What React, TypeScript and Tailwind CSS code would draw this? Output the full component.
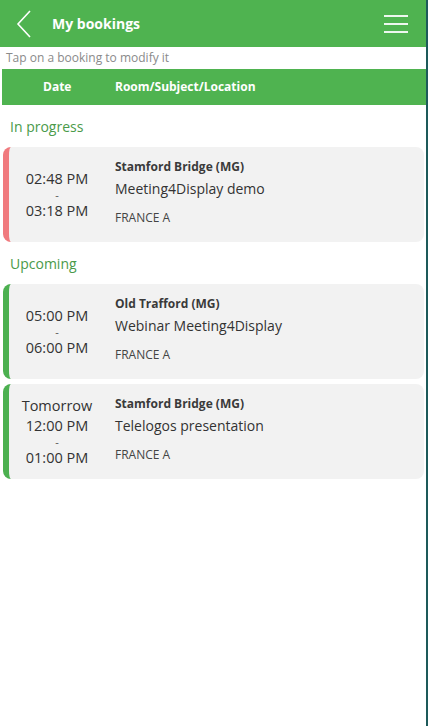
type Booking = {
  day?: string;
  start: string;
  end: string;
  room: string;
  subject: string;
  location: string;
  accent: "red" | "green";
};

const IN_PROGRESS: Booking[] = [
  {
    start: "02:48 PM",
    end: "03:18 PM",
    room: "Stamford Bridge (MG)",
    subject: "Meeting4Display demo",
    location: "FRANCE A",
    accent: "red",
  },
];

const UPCOMING: Booking[] = [
  {
    start: "05:00 PM",
    end: "06:00 PM",
    room: "Old Trafford (MG)",
    subject: "Webinar Meeting4Display",
    location: "FRANCE A",
    accent: "green",
  },
  {
    day: "Tomorrow",
    start: "12:00 PM",
    end: "01:00 PM",
    room: "Stamford Bridge (MG)",
    subject: "Telelogos presentation",
    location: "FRANCE A",
    accent: "green",
  },
];

function BookingCard({ b }: { b: Booking }) {
  return (
    <div
      className={
        "flex h-[95px] rounded-lg bg-[#f2f2f2] border-l-[6px] " +
        (b.accent === "red" ? "border-[#f07a7e]" : "border-[#4cb050]")
      }
    >
      {/* time column */}
      <div className="w-[106px] pr-[10px] flex flex-col items-center justify-center text-[14.5px] leading-[18px] text-[#333]">
        {b.day && <div className="mb-[2px]">{b.day}</div>}
        <div>{b.start}</div>
        <div className="text-[11px] leading-[14px] text-[#555]">-</div>
        <div>{b.end}</div>
      </div>
      {/* details */}
      <div className="flex flex-col pt-[12px]">
        <div className="text-[12px] font-bold text-[#3a3a3a] leading-[16px]">{b.room}</div>
        <div className="text-[14px] text-[#333] leading-[18px] mt-[5px]">{b.subject}</div>
        <div className="text-[12px] text-[#444] leading-[16px] mt-[12px]">{b.location}</div>
      </div>
    </div>
  );
}

function Section({ title, items }: { title: string; items: Booking[] }) {
  return (
    <div>
      <div className="h-[42px] pl-[10px] flex items-center text-[14px] text-[#4a9a4a]">{title}</div>
      <div className="flex flex-col gap-[5px] pl-[3px] pr-[2px]">
        {items.map((b, i) => (
          <BookingCard key={i} b={b} />
        ))}
      </div>
    </div>
  );
}

export default function App() {
  return (
    <div
      className="h-[726px] w-[428px] flex bg-white overflow-hidden"
      style={{ fontFamily: '"Open Sans", "Noto Sans", sans-serif' }}
    >
      <div className="flex-1 flex flex-col">
        {/* Top bar */}
        <header className="h-[47px] bg-[#4fb350] flex items-center text-white">
          <div className="w-[52px] flex items-center pl-[16px]">
            <svg width="16" height="28" viewBox="0 0 16 28" fill="none">
              <polyline points="14,1 2,14 14,27" stroke="white" strokeWidth="1.6" />
            </svg>
          </div>
          <h1 className="flex-1 text-[14px] font-bold">My bookings</h1>
          <div className="w-[24px] mr-[18px] flex flex-col gap-[6px]">
            <span className="h-[2px] bg-white/90 block" />
            <span className="h-[2px] bg-white/90 block" />
            <span className="h-[2px] bg-white/90 block" />
          </div>
        </header>

        <div className="h-[22px] pl-[6px] flex items-center text-[12px] text-[#8a8a8a]">
          Tap on a booking to modify it
        </div>

        {/* Column headers */}
        <div className="ml-[2px] h-[36px] bg-[#4fb350] flex items-center text-white text-[12px] font-bold">
          <div className="w-[113px] pl-[41px]">Date</div>
          <div>Room/Subject/Location</div>
        </div>

        <Section title="In progress" items={IN_PROGRESS} />
        <Section title="Upcoming" items={UPCOMING} />
      </div>
      <div className="w-[2px] bg-[#1d5a5a]" />
    </div>
  );
}
